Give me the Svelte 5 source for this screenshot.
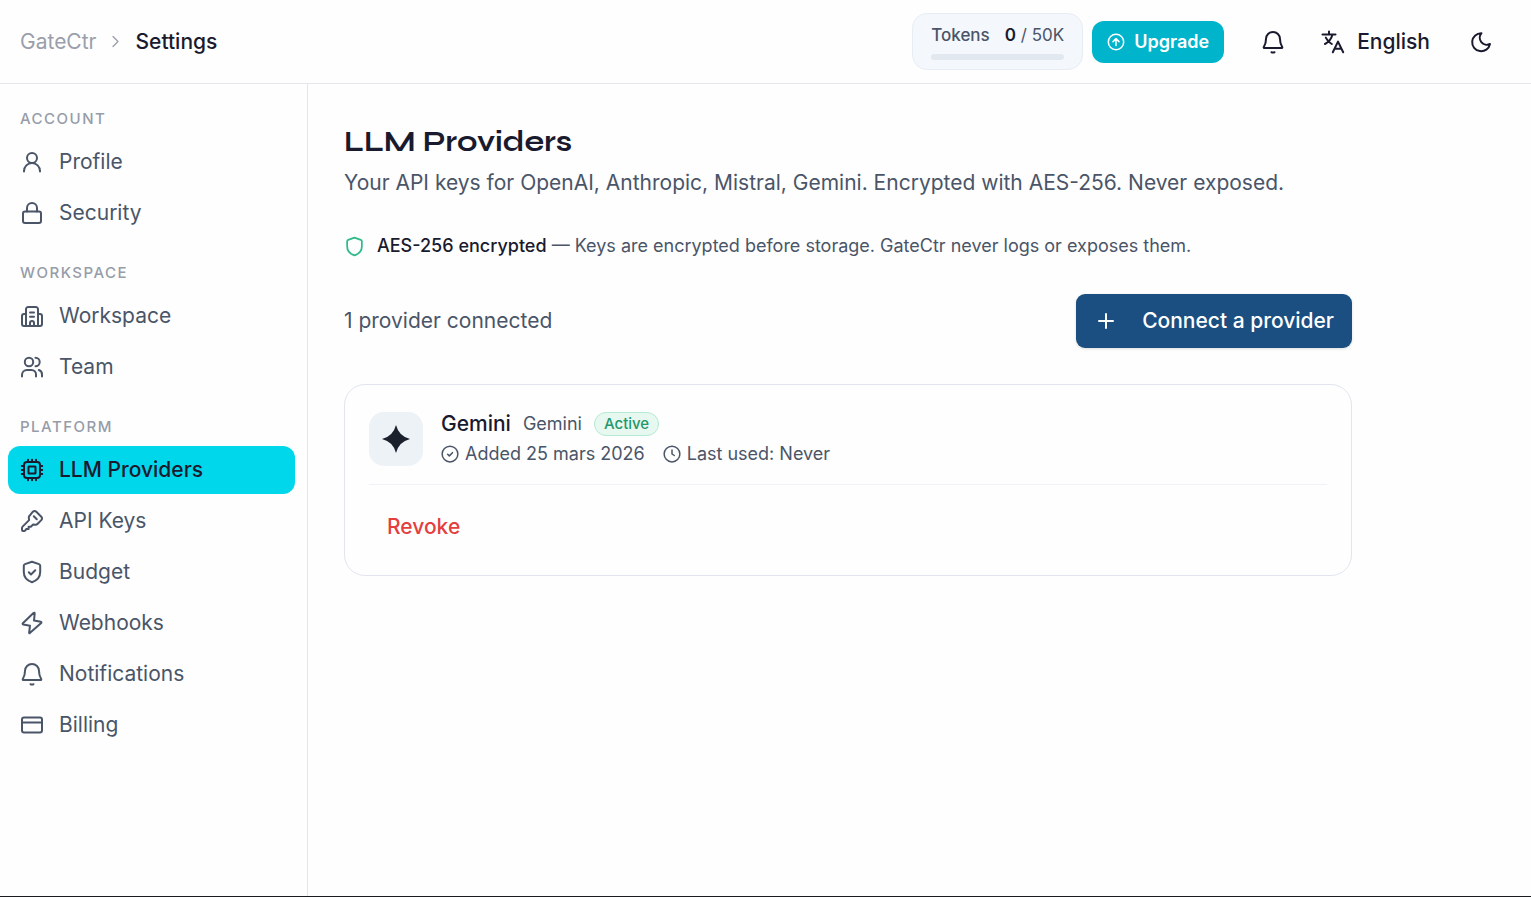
<script>
  const icons = {
    user: '<circle cx="12" cy="8" r="5"/><path d="M4 21.500V21a8 8 0 0 1 16 0v.500"/>',
    lock: '<rect x="3" y="10.500" width="18" height="11.500" rx="2"/><path d="M7 10.500V7a5 5 0 0 1 10 0v3.500"/>',
    building: '<path d="M6 22V5.250A2.250 2.250 0 0 1 8.250 3h7.500A2.250 2.250 0 0 1 18 5.250V22M6 10H4a2 2 0 0 0-2 2v8a2 2 0 0 0 2 2h16a2 2 0 0 0 2-2v-8a2 2 0 0 0-2-2h-2M10 8.500h4M10 12.800h4M10 22v-3a2 2 0 0 1 4 0v3"/>',
    users: '<circle cx="9" cy="7" r="4.200"/><path d="M2 21.500V20a5 5 0 0 1 5-5h4.500a4.500 4.500 0 0 1 4.500 4.500v2M15.500 2.800a4.200 4.200 0 0 1 0 8.400M18.800 15a4.600 4.600 0 0 1 3.200 4.500v2"/>',
    chip: '<rect x="4" y="4" width="16" height="16" rx="3"/><rect x="8.500" y="8.500" width="7" height="7" rx=".5"/><path d="M8 4V1.800M12 4V1.800M16 4V1.800M8 22.200V20M12 22.200V20M16 22.200V20M4 8H1.800M4 12H1.800M4 16H1.800M22.200 8H20M22.200 12H20M22.200 16H20"/>',
    key: '<path d="M12.900 2.700a2.400 2.400 0 0 1 3.400 0l5 5a2.400 2.400 0 0 1 0 3.400l-3.900 3.900a2.400 2.400 0 0 1-1.900.700l-2.400-.200-2.300 2.300H8.600v2.200H6.400l-1.300 1.600a1.200 1.200 0 0 1-.8.400H3a1 1 0 0 1-1-1v-2a2 2 0 0 1 .6-1.400l6.500-6.500-.300-2.400a2.300 2.300 0 0 1 .700-1.900zM13.800 7.200l3 3"/>',
    budget: '<path d="M12 1.800l7 2.300a1.700 1.700 0 0 1 1.200 1.600V12c0 5-3.200 8.500-8.200 10.200C7 20.500 3.800 17 3.800 12V5.700A1.700 1.700 0 0 1 5 4.100zM8.750 12.250l2.250 2.250 4.250-4.250"/>',
    bolt: '<path d="M13.500 2 2.800 12.200a.8.8 0 0 0 .4 1.300l6.800 1.200-.9 7.100c0 .5.300.6.700.300L21.200 12a.8.8 0 0 0-.4-1.300L14 9.500l.7-7.100c0-.700-.6-.900-1.200-.400z"/>',
    bell: '<path d="M12 2a7 7 0 0 0-7 7c0 4.600-1.200 6.300-2.200 7.900a.8.8 0 0 0 .7 1.200h17a.8.8 0 0 0 .7-1.200C20.200 15.300 19 13.600 19 9a7 7 0 0 0-7-7zM10.500 22.200c1 .4 2 .4 3 0"/>',
    card: '<rect x="2" y="4.500" width="20" height="15" rx="2"/><path d="M2 9.500h20"/>',
    up: '<circle cx="12" cy="12" r="10.250"/><path d="M12 16.800V8M8 11.500l4-4 4 4"/>',
    language: '<path d="M1.500 4.600h13M8 1.500v3M11.500 4.600c-1 4-3.600 7.400-7.500 9.400M4.800 7.600c1.400 3 3.500 5 6 6.400M11.800 22.300 17 11.600l5.200 10.700M13.600 18.700h6.800"/>',
    moon: '<path d="M12.500 3.200A9 9 0 1 0 21 14A7 7 0 0 1 12.500 3.200z"/>',
    chevron: '<path d="m8 4 8 8-8 8"/>',
    plus: '<path d="M12 5v14M5 12h14"/>',
    shield: '<path d="M12 1.800l7.200 2.600a1.700 1.700 0 0 1 1.200 1.600V12c0 5-3.200 8.500-8.400 10.200C6.800 20.500 3.600 17 3.600 12V6a1.700 1.700 0 0 1 1.200-1.600z"/>',
    check: '<circle cx="12" cy="12" r="10.500"/><path d="M8.800 12.300l2.300 2.200 4.200-4.300"/>',
    clock: '<circle cx="12" cy="12" r="10.500"/><path d="M12 6.500V12l3 2"/>'
  };

  const groups = [
    { title: 'Account', items: [['Profile', 'user'], ['Security', 'lock']] },
    { title: 'Workspace', items: [['Workspace', 'building'], ['Team', 'users']] },
    {
      title: 'Platform',
      items: [
        ['LLM Providers', 'chip'],
        ['API Keys', 'key'],
        ['Budget', 'budget'],
        ['Webhooks', 'bolt'],
        ['Notifications', 'bell'],
        ['Billing', 'card']
      ]
    }
  ];
  let active = $state('LLM Providers');
</script>

{#snippet icon(name, size)}
  <svg class="icon {size}" viewBox="0 0 24 24" aria-hidden="true">{@html icons[name]}</svg>
{/snippet}

<div class="page">
  <header>
    <nav class="crumbs" aria-label="Breadcrumb">
      <a href="#home">GateCtr</a>
      {@render icon('chevron', 'tiny')}
      <span class="current">Settings</span>
    </nav>
    <div class="tools">
      <div class="tokens">
        <div class="token-row"><span class="token-name">Tokens</span><span><b>0</b> / 50K</span></div>
        <div class="track"></div>
      </div>
      <button class="upgrade">{@render icon('up', 'small')}Upgrade</button>
      <button class="ghost bell" aria-label="Notifications">{@render icon('bell', 'normal')}</button>
      <button class="ghost language">{@render icon('language', 'normal')}English</button>
      <button class="ghost" aria-label="Dark mode">{@render icon('moon', 'normal')}</button>
    </div>
  </header>

  <div class="body">
    <aside>
      {#each groups as group}
        <section class="group">
          <h2>{group.title}</h2>
          {#each group.items as [label, glyph]}
            <a class="item" class:active={active === label} href="#{glyph}" onclick={() => (active = label)}>
              {@render icon(glyph, 'normal')}{label}
            </a>
          {/each}
        </section>
      {/each}
    </aside>

    <main>
      <h1>LLM Providers</h1>
      <p class="lead">Your API keys for OpenAI, Anthropic, Mistral, Gemini. Encrypted with AES-256. Never exposed.</p>
      <p class="note">
        {@render icon('shield', 'medium')}
        <span><strong>AES-256 encrypted</strong> — Keys are encrypted before storage. GateCtr never logs or exposes them.</span>
      </p>
      <div class="bar">
        <span>1 provider connected</span>
        <button class="connect">{@render icon('plus', 'normal')}Connect a provider</button>
      </div>
      <article class="card">
        <div class="provider">
          <div class="logo">
            <svg viewBox="0 0 30 30" aria-hidden="true"><path d="M15 0Q18 12 30 15Q18 18 15 30Q12 18 0 15Q12 12 15 0Z" /></svg>
          </div>
          <div class="info">
            <div class="names"><h3>Gemini</h3><span>Gemini</span><span class="badge">Active</span></div>
            <div class="meta">
              <span>{@render icon('check', 'small')}Added 25 mars 2026</span>
              <span>{@render icon('clock', 'small')}Last used: Never</span>
            </div>
          </div>
        </div>
        <div class="actions"><button class="revoke">Revoke</button></div>
      </article>
    </main>
  </div>
</div>

<style>
  :global(body) {
    margin: 0;
    background: #fefefe;
  }
  .page {
    box-sizing: border-box;
    min-height: 100vh;
    display: flex;
    flex-direction: column;
    border-bottom: 1px solid #1a1b1e;
    font: 400 21px/30px Inter, sans-serif;
    color: #4a5568;
  }
  h1, h2, h3, p {
    margin: 0;
  }
  button {
    font: inherit;
    color: inherit;
    border: 0;
    background: none;
    padding: 0;
    cursor: pointer;
    display: flex;
    align-items: center;
  }
  a {
    color: inherit;
    text-decoration: none;
  }
  .icon {
    flex: none;
    width: 24px;
    height: 24px;
    fill: none;
    stroke: currentColor;
    stroke-width: 2;
    stroke-linecap: round;
    stroke-linejoin: round;
  }
  .icon.medium {
    width: 21px;
    height: 21px;
  }
  .icon.small {
    width: 18px;
    height: 18px;
  }
  .icon.tiny {
    width: 15px;
    height: 15px;
  }
  header {
    display: flex;
    align-items: center;
    justify-content: space-between;
    height: 83px;
    padding: 0 35px 0 20px;
    border-bottom: 1px solid #e4e7ec;
  }
  .crumbs {
    display: flex;
    align-items: center;
    gap: 12px;
    color: #9a9fab;
  }
  .current {
    color: #1a1a2e;
    font-weight: 500;
  }
  .tools {
    display: flex;
    align-items: center;
    color: #1a1a2e;
  }
  .tokens {
    box-sizing: border-box;
    width: 171px;
    padding: 9px 18px;
    border: 1px solid #e6edf4;
    border-radius: 15px;
    background: #f4f7fb;
    font-size: 17px;
    line-height: 24px;
    color: #4a5568;
  }
  .token-row {
    display: flex;
    justify-content: space-between;
    white-space: nowrap;
  }
  .token-name {
    font-weight: 500;
  }
  b {
    font-weight: 600;
    color: #1a1a2e;
  }
  .track {
    margin-top: 7px;
    height: 6px;
    border-radius: 3px;
    background: #e2e8f0;
  }
  .upgrade {
    margin-left: 9px;
    height: 42px;
    padding: 0 15px;
    gap: 9px;
    border-radius: 12px;
    background: #00b4cc;
    color: #fff;
    font-size: 18px;
    font-weight: 600;
  }
  .ghost {
    padding: 6px 3px;
  }
  .bell {
    margin-left: 34px;
  }
  .language {
    gap: 12px;
    margin: 0 33px 0 30px;
    font-weight: 500;
  }
  .body {
    flex: 1;
    display: flex;
  }
  aside {
    box-sizing: border-box;
    flex: none;
    width: 308px;
    padding: 23px 12px 24px 8px;
    display: flex;
    flex-direction: column;
    gap: 24px;
    border-right: 1px solid #e2e6eb;
  }
  .group {
    display: flex;
    flex-direction: column;
    gap: 3px;
  }
  h2 {
    padding: 0 12px 4px;
    font-size: 15px;
    line-height: 24px;
    font-weight: 500;
    letter-spacing: 1.5px;
    text-transform: uppercase;
    color: #969ca8;
  }
  .item {
    display: flex;
    align-items: center;
    gap: 15px;
    height: 48px;
    padding: 0 12px;
    border-radius: 12px;
  }
  .item.active {
    background: #00d7eb;
    color: #1a1a2e;
    font-weight: 500;
  }
  main {
    flex: 1;
    max-width: 1008px;
    padding: 40px 36px;
  }
  h1 {
    font: 700 29px/36px Syne, 'DejaVu Sans', sans-serif;
    color: #1a1a2e;
  }
  .lead {
    margin-top: 8px;
  }
  .note {
    display: flex;
    align-items: center;
    gap: 12px;
    margin-top: 36px;
    font-size: 18px;
    line-height: 24px;
  }
  .note .icon {
    color: #2fba88;
  }
  strong {
    font-weight: 500;
    color: #1a1a2e;
  }
  .bar {
    display: flex;
    align-items: center;
    justify-content: space-between;
    margin-top: 36px;
  }
  .connect {
    height: 54px;
    padding: 0 18px;
    gap: 24px;
    border-radius: 9px;
    background: #1b4f82;
    color: #fff;
    font-weight: 500;
    box-shadow: 0 1px 3px #0002;
  }
  .card {
    margin-top: 36px;
    padding: 24px;
    border: 1px solid #e2e5f0;
    border-radius: 21px;
  }
  .provider {
    display: flex;
    align-items: center;
    gap: 18px;
    padding-bottom: 15px;
    border-bottom: 1px solid #eff2f6;
  }
  .logo {
    display: grid;
    place-items: center;
    width: 54px;
    height: 54px;
    border-radius: 15px;
    background: #edf2f7;
  }
  .logo svg {
    width: 28px;
    height: 28px;
    fill: #1a202c;
  }
  .names, .meta, .meta span {
    display: flex;
    align-items: center;
  }
  .names {
    gap: 12px;
    font-size: 18px;
  }
  h3 {
    font-size: 21px;
    font-weight: 500;
    color: #1a1a2e;
  }
  .badge {
    padding: 0 9px;
    border: 1px solid #b5ead3;
    border-radius: 12px;
    background: #e6f8f0;
    color: #249668;
    font-size: 15px;
    line-height: 22px;
    font-weight: 500;
  }
  .meta {
    gap: 18px;
    font-size: 18px;
  }
  .meta span {
    gap: 6px;
  }
  .actions {
    padding-top: 18px;
  }
  .revoke {
    height: 48px;
    padding: 0 18px;
    color: #e53e3e;
    font-weight: 500;
  }
</style>
